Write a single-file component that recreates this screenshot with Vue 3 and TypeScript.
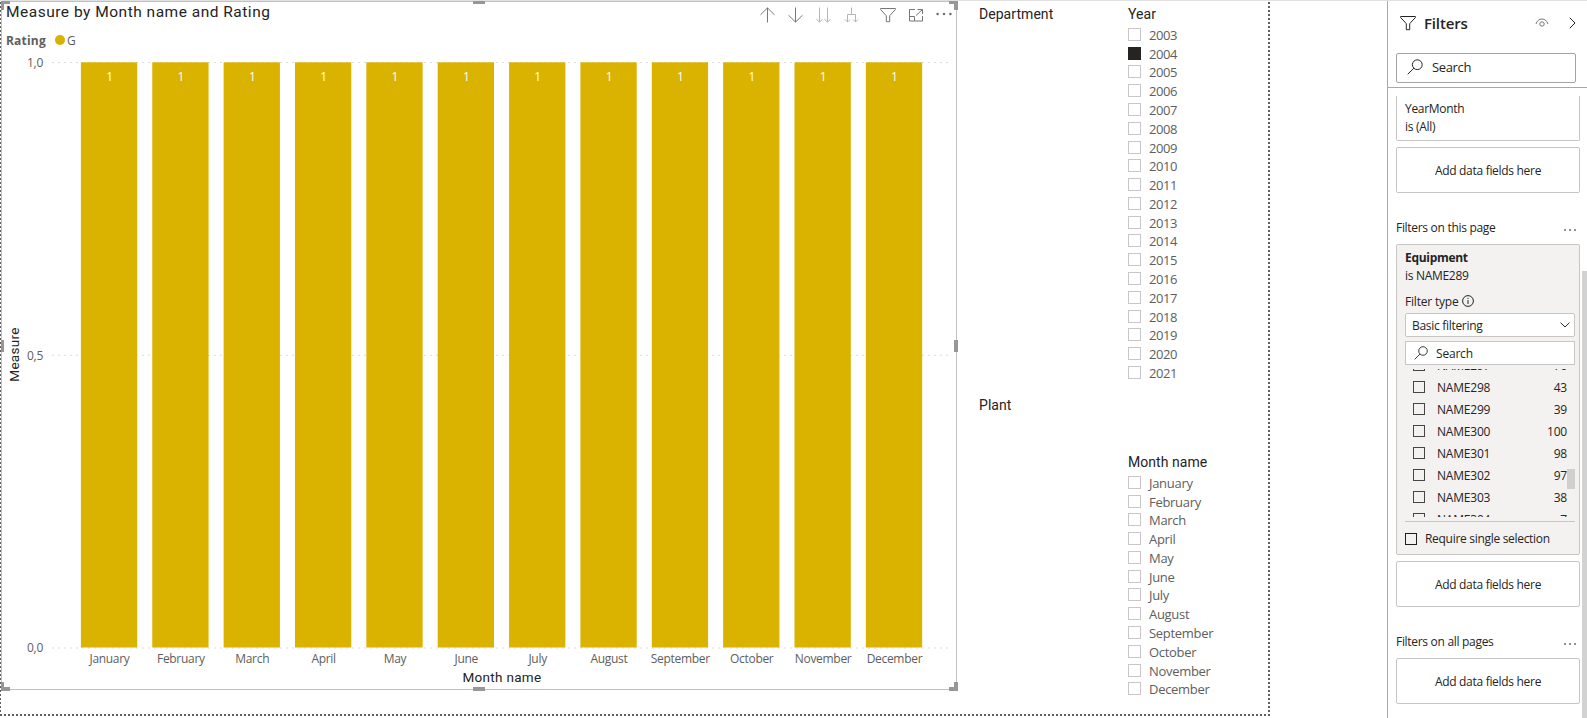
<template>
  <div class="app">
    <main class="report">
      <section class="visual">
        <header class="visual-header">
          <h2 class="visual-title">Measure by Month name and Rating</h2>
          <div class="visual-toolbar">
            <svg class="tool" viewBox="0 0 16 16">
              <path d="M7.500 15.500V1M.5 7.800L7.500.9l7 6.900" />
            </svg>
            <svg class="tool" viewBox="0 0 16 16">
              <path d="M7.500.5V15M.5 8.200l7 6.900 7-6.900" />
            </svg>
            <svg class="tool muted" viewBox="0 0 16 16">
              <path d="M3.500.5V15M.3 12l3.200 3.200L6.700 12M11.500.5V15M8.300 12l3.200 3.200 3.200-3.200" />
            </svg>
            <svg class="tool muted" viewBox="0 0 16 16">
              <path d="M7.500.5V7M3.500 15V7.500h8V15M1 12.500L3.500 15 6 12.500M9 12.500l2.500 2.500 2.500-2.500" />
            </svg>
            <svg class="tool funnel" viewBox="0 0 16 16">
              <path d="M.6 1.500h14.800v1L9.700 8.700v6H6.300v-6L.6 2.500z" />
            </svg>
            <svg class="tool" viewBox="0 0 16 16">
              <path d="M7 2.500H1.500v11.500H14.500V9M1.500 9.500H6.500V14M9.500 2.500h5v4.500M14.500 2.500L8 8.500" />
            </svg>
            <svg class="tool dots" viewBox="0 0 16 16">
              <circle cx="1.600" cy="8" r="1.200" />
              <circle cx="8" cy="8" r="1.200" />
              <circle cx="14.400" cy="8" r="1.200" />
            </svg>
          </div>
        </header>

        <div class="legend">
          <span class="legend-title">Rating</span>
          <span class="legend-dot"></span>
          <span>G</span>
        </div>

        <svg class="plot" viewBox="2 52 954 637">
          <line
            v-for="tick in ticks"
            :key="tick.label"
            class="grid-line"
            x1="52"
            x2="951"
            :y1="tick.y"
            :y2="tick.y"
          />
          <text
            v-for="tick in ticks"
            :key="tick.label"
            class="tick-label end"
            x="43"
            :y="tick.y + 4.300"
          >
            {{ tick.label }}
          </text>
          <g v-for="(month, index) in months" :key="month">
            <rect class="bar" :x="barX(index)" y="62.300" width="56.300" height="585.200" />
            <text class="bar-label" :x="barX(index) + 28.700" y="81">1</text>
            <text class="tick-label" :x="barX(index) + 28.600" y="663">{{ month }}</text>
          </g>
          <text class="axis-title" x="502" y="682">Month name</text>
          <text class="axis-title" transform="translate(19 354.500) rotate(-90)">Measure</text>
        </svg>

        <span v-for="handle in handles" :key="handle" class="handle" :class="handle"></span>
      </section>

      <div class="slicers left-slicers">
        <h3 class="slicer-title">Department</h3>
        <h3 class="slicer-title plant">Plant</h3>
      </div>

      <div class="slicers">
        <div class="slicer">
          <h3 class="slicer-title">Year</h3>
          <label v-for="year in years" :key="year" class="slicer-item year" @click="selectedYear = year">
            <span class="box" :class="{ checked: year === selectedYear }"></span>
            <span class="slicer-text">{{ year }}</span>
          </label>
        </div>
        <div class="slicer month-slicer">
          <h3 class="slicer-title">Month name</h3>
          <label v-for="month in months" :key="month" class="slicer-item">
            <span class="box"></span>
            <span class="slicer-text">{{ month }}</span>
          </label>
        </div>
      </div>
    </main>

    <aside class="pane">
      <div class="pane-top">
        <header class="pane-header">
          <svg class="pane-funnel" viewBox="0 0 16 16">
            <path d="M.6 1.500h14.800v1L9.700 8.700v6H6.300v-6L.6 2.500z" />
          </svg>
          <h2 class="pane-title">Filters</h2>
          <svg class="eye" viewBox="0 0 14 10">
            <path d="M1 6C2 2.800 4.200 1 7 1s5 1.800 6 5" />
            <circle cx="7" cy="6" r="2.200" />
          </svg>
          <svg class="collapse" viewBox="0 0 7 12">
            <path d="M.8.800L6 6 .8 11.200" />
          </svg>
        </header>
        <div class="search">
          <svg class="search-icon" viewBox="0 0 16 16">
            <circle cx="10.300" cy="5.700" r="4.900" />
            <path d="M6.800 9.200L.7 15.300" />
          </svg>
          <span>Search</span>
        </div>
      </div>

      <div class="pane-body">
        <div class="card clipped">
          <p>YearMonth</p>
          <p>is (All)</p>
        </div>
        <div class="drop-zone">Add data fields here</div>

        <div class="section-title">
          <span>Filters on this page</span>
          <svg class="more" viewBox="0 0 12 4">
            <path d="M0 2h2M5 2h2M10 2h2" />
          </svg>
        </div>
        <div class="card active">
          <p class="field-name">Equipment</p>
          <p>is NAME289</p>
          <p class="filter-type">
            Filter type
            <svg class="info" viewBox="0 0 12 12">
              <circle cx="6" cy="6" r="5.400" />
              <path d="M6 5v4M6 2.900v1.100" />
            </svg>
          </p>
          <div class="select">
            <span>Basic filtering</span>
            <svg class="chevron" viewBox="0 0 10 6">
              <path d="M.6.700L5 5 9.400.700" />
            </svg>
          </div>
          <div class="search small">
            <svg class="search-icon" viewBox="0 0 16 16">
              <circle cx="10.300" cy="5.700" r="4.900" />
              <path d="M6.800 9.200L.7 15.300" />
            </svg>
            <span>Search</span>
          </div>
          <div class="values">
            <ul class="value-list">
              <li v-for="item in equipment" :key="item.name" class="value-row">
                <span class="check"></span>
                <span class="value-name">{{ item.name }}</span>
                <span class="value-count">{{ item.count }}</span>
              </li>
            </ul>
            <span class="values-thumb"></span>
          </div>
          <div class="single">
            <span class="check dark"></span>
            Require single selection
          </div>
        </div>
        <div class="drop-zone">Add data fields here</div>

        <div class="section-title">
          <span>Filters on all pages</span>
          <svg class="more" viewBox="0 0 12 4">
            <path d="M0 2h2M5 2h2M10 2h2" />
          </svg>
        </div>
        <div class="drop-zone last">Add data fields here</div>
      </div>
      <span class="pane-thumb"></span>
    </aside>
  </div>
</template>

<script setup lang="ts">
  import { ref } from 'vue'

  interface Tick {
    label: string
    y: number
  }

  interface FilterValue {
    name: string
    count: number
  }

  const months = [
    'January',
    'February',
    'March',
    'April',
    'May',
    'June',
    'July',
    'August',
    'September',
    'October',
    'November',
    'December',
  ]

  const years = Array.from({ length: 19 }, (_, i) => 2003 + i)
  const selectedYear = ref(2004)

  const ticks: Tick[] = [
    { label: '1,0', y: 62.5 },
    { label: '0,5', y: 355.3 },
    { label: '0,0', y: 648 },
  ]

  const equipment: FilterValue[] = [
    { name: 'NAME297', count: 76 },
    { name: 'NAME298', count: 43 },
    { name: 'NAME299', count: 39 },
    { name: 'NAME300', count: 100 },
    { name: 'NAME301', count: 98 },
    { name: 'NAME302', count: 97 },
    { name: 'NAME303', count: 38 },
    { name: 'NAME304', count: 7 },
  ]

  const handles = ['nw', 'n', 'ne', 'w', 'e', 'sw', 's', 'se']

  const barX = (index: number): number => 80.9 + index * 71.36
</script>

<style>
  body {
    margin: 0;
    background: #ffffff;
  }
</style>

<style scoped>
  .app {
    box-sizing: border-box;
    display: flex;
    justify-content: space-between;
    height: 718px;
    border-top: 1px solid #e1e1e1;
    background: #ffffff;
    color: #252423;
    font-family: 'Open Sans', 'Noto Sans', sans-serif;
    font-size: 12px;
    overflow: hidden;
  }

  .app *,
  .app *::after {
    box-sizing: border-box;
  }

  h2,
  h3,
  p,
  ul {
    margin: 0;
    padding: 0;
  }

  svg {
    flex-shrink: 0;
    fill: none;
    stroke: currentColor;
  }

  /* Report canvas */
  .report {
    display: flex;
    width: 1270px;
    height: 715px;
    padding-left: 1px;
    background:
      repeating-linear-gradient(#5f5f5f 0 2px, transparent 2px 4px) 0 1px / 1px 100% no-repeat,
      repeating-linear-gradient(#5f5f5f 0 2px, transparent 2px 4px) 100% 1px / 2px 100% no-repeat,
      repeating-linear-gradient(90deg, #5f5f5f 0 2px, transparent 2px 4px) 0 100% / 100% 2px no-repeat;
  }

  .visual {
    position: relative;
    width: 956px;
    height: 689px;
    border: 1px solid #c1c1c1;
    background: #ffffff;
  }

  .visual-header {
    display: flex;
    justify-content: space-between;
    height: 26px;
    padding: 0 4px;
  }

  .visual-title {
    font: 400 15.5px/20px Roboto, sans-serif;
    letter-spacing: 0.5px;
  }

  .visual-toolbar {
    display: flex;
    gap: 12px;
    padding-top: 5px;
    color: #777777;
  }

  .tool {
    width: 16px;
    height: 16px;
  }

  .tool.muted {
    color: #b5b5b5;
  }

  .tool.dots {
    fill: #666666;
    stroke: none;
    margin-top: -1px;
  }

  .tool.funnel {
    margin-left: 8px;
  }

  .legend {
    display: flex;
    align-items: center;
    height: 24px;
    padding-left: 4px;
    color: #605e5c;
  }

  .legend-title {
    width: 49px;
    font-weight: 700;
    letter-spacing: 0.2px;
  }

  .legend-dot {
    width: 10px;
    height: 10px;
    margin-right: 2px;
    border-radius: 50%;
    background: #d9b300;
  }

  .plot {
    display: block;
    width: 954px;
    height: 637px;
  }

  .plot text {
    stroke: none;
    text-anchor: middle;
  }

  .grid-line {
    stroke: #dddddd;
    stroke-width: 1;
    stroke-dasharray: 2 4;
  }

  .bar {
    fill: #d9b300;
    stroke: none;
  }

  .plot .bar-label {
    fill: #ffffff;
  }

  .plot .tick-label {
    fill: #605e5c;
    letter-spacing: -0.3px;
  }

  .plot .tick-label.end {
    text-anchor: end;
  }

  .plot .axis-title {
    fill: #252423;
    font-family: Roboto, sans-serif;
    font-size: 13.5px;
    letter-spacing: 0.3px;
  }

  .handle {
    position: absolute;
    border: 0 solid #979797;
  }

  .nw,
  .ne,
  .sw,
  .se {
    width: 9px;
    height: 9px;
  }

  .nw {
    top: -1px;
    left: -1px;
    border-width: 3px 0 0 3px;
  }

  .ne {
    top: -1px;
    right: -2px;
    border-width: 3px 4px 0 0;
  }

  .sw {
    bottom: -2px;
    left: -1px;
    border-width: 0 0 4px 3px;
  }

  .se {
    right: -2px;
    bottom: -2px;
    border-width: 0 4px 4px 0;
  }

  .n,
  .s {
    left: 471px;
    width: 12px;
    border-top-width: 3px;
  }

  .n {
    top: -1px;
  }

  .s {
    bottom: -2px;
    border-top-width: 4px;
  }

  .w,
  .e {
    top: 338px;
    height: 12px;
    border-left-width: 3px;
  }

  .w {
    left: -1px;
  }

  .e {
    right: -2px;
    border-left-width: 4px;
  }

  /* Slicers */
  .slicers {
    padding-top: 3px;
  }

  .left-slicers {
    width: 149px;
    margin-left: 22px;
  }

  .slicer-title {
    height: 21px;
    font: 400 14px/20px Roboto, sans-serif;
    letter-spacing: 0.05px;
  }

  .plant {
    margin-top: 370px;
  }

  .month-slicer {
    margin-top: 70px;
  }

  .slicer-item {
    display: flex;
    align-items: center;
    gap: 8px;
    height: 18.79px;
    font-size: 13px;
    letter-spacing: -0.3px;
    color: #605e5c;
  }

  .slicer-item.year {
    letter-spacing: -0.45px;
  }

  .slicer-text {
    padding-top: 1px;
  }

  .box {
    width: 13px;
    height: 13px;
    border: 1px solid #c8c6c8;
  }

  .box.checked {
    border-color: #252423;
    background: #252423;
  }

  /* Filter pane */
  .pane {
    position: relative;
    width: 200px;
    border-left: 1px solid #a9a8a7;
    letter-spacing: -0.3px;
  }

  .pane-top {
    height: 87px;
    border-bottom: 1px solid #a9a8a7;
  }

  .pane-header {
    display: flex;
    align-items: center;
    height: 44px;
    padding: 0 11px 0 12px;
  }

  .pane-funnel {
    width: 16px;
    height: 16px;
  }

  .pane-title {
    margin-left: 8px;
    font-size: 15px;
    font-weight: 600;
    letter-spacing: -0.15px;
  }

  .eye {
    width: 14px;
    height: 10px;
    margin-left: auto;
    color: #777777;
  }

  .collapse {
    width: 7px;
    height: 12px;
    margin-left: 20px;
  }

  .search {
    display: flex;
    align-items: center;
    gap: 9px;
    width: 180px;
    height: 30px;
    margin: 8px 0 0 8px;
    padding: 0 0 2px 10px;
    border: 1px solid #a6a4a2;
    border-radius: 2px;
    background: #ffffff;
    font-size: 13px;
    letter-spacing: -0.35px;
  }

  .search-icon {
    width: 16px;
    height: 16px;
  }

  .search.small {
    gap: 8px;
    width: 170px;
    height: 24px;
    margin: 4px 0 0;
    padding: 0 0 0 8px;
    border-color: #c8c6c4;
    border-radius: 0;
    font-size: 12px;
    letter-spacing: -0.2px;
  }

  .search.small .search-icon {
    width: 14px;
    height: 14px;
  }

  .search.small span,
  .select span,
  .value-name,
  .value-count {
    padding-top: 2px;
  }

  .pane-body {
    padding: 8px 7px 0 8px;
  }

  .card {
    padding: 4px 4px 0 8px;
    border: 1px solid #c8c6c4;
    border-radius: 2px;
    line-height: 18px;
  }

  .card.clipped {
    height: 45px;
    border-top: 0;
    border-radius: 0 0 2px 2px;
  }

  .card.active {
    height: 311px;
    background: #f3f2f1;
  }

  .field-name {
    font-weight: 700;
  }

  .filter-type {
    display: flex;
    align-items: center;
    gap: 4px;
    margin-top: 8px;
    letter-spacing: -0.2px;
  }

  .info {
    width: 12px;
    height: 12px;
    margin-top: -2px;
  }

  .select {
    display: flex;
    align-items: center;
    justify-content: space-between;
    width: 170px;
    height: 24px;
    margin-top: 2px;
    padding: 0 4px 0 6px;
    border: 1px solid #c8c6c4;
    border-radius: 2px;
    background: #ffffff;
  }

  .chevron {
    width: 10px;
    height: 6px;
  }

  .drop-zone {
    display: flex;
    align-items: center;
    justify-content: center;
    height: 46px;
    margin-top: 6px;
    border: 1px solid #c8c6c4;
    border-radius: 2px;
  }

  .drop-zone.last {
    margin-top: 0;
  }

  .section-title {
    display: flex;
    align-items: center;
    justify-content: space-between;
    height: 20px;
    margin: 24px 4px 7px 0;
  }

  .more {
    width: 12px;
    height: 4px;
    margin-top: 5px;
    stroke-width: 1;
  }

  .values {
    position: relative;
    width: 170px;
    height: 148px;
    margin-top: 4px;
    letter-spacing: -0.2px;
    overflow: hidden;
  }

  .value-list {
    margin-top: -15px;
    list-style: none;
  }

  .value-row {
    display: flex;
    align-items: center;
    height: 22px;
    padding: 0 8px;
  }

  .check {
    width: 12px;
    height: 12px;
    border: 1px solid #484644;
  }

  .check.dark {
    border-color: #201f1e;
  }

  .value-name {
    margin-left: 12px;
  }

  .value-count {
    margin-left: auto;
  }

  .values-thumb {
    position: absolute;
    top: 100px;
    right: 0;
    width: 8px;
    height: 20px;
    background: #d2d0ce;
  }

  .single {
    display: flex;
    align-items: center;
    gap: 8px;
    width: 170px;
    height: 34px;
    margin-top: 4px;
    border-top: 1px solid #c8c6c4;
  }

  .pane-thumb {
    position: absolute;
    top: 270px;
    right: 0;
    bottom: 0;
    width: 5px;
    background: #d2d2d2;
  }
</style>
